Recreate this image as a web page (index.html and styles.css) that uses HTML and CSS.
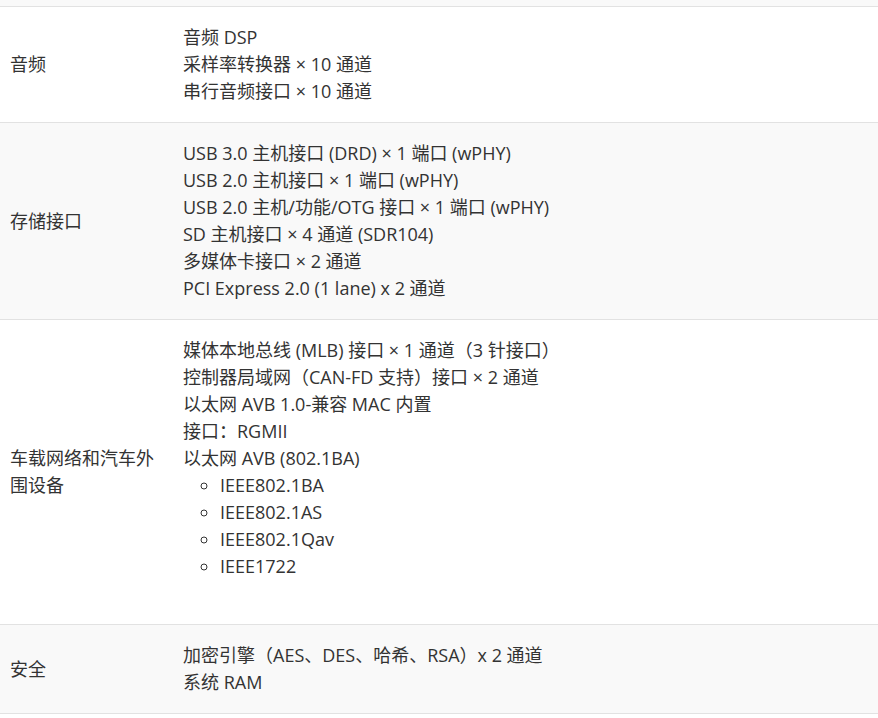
FILE: index.html
```html
<!DOCTYPE html>
<html lang="zh-CN">
<head>
<meta charset="utf-8">
<link rel="stylesheet" href="styles.css">
</head>
<body>
<table class="spec">
  <tbody>
    <tr class="prev"><td></td><td></td></tr>
    <tr>
      <td class="label">音频</td>
      <td class="value">音频 DSP<br>采样率转换器 × 10 通道<br>串行音频接口 × 10 通道</td>
    </tr>
    <tr class="alt">
      <td class="label">存储接口</td>
      <td class="value">USB 3.0 主机接口 (DRD) × 1 端口 (wPHY)<br>USB 2.0 主机接口 × 1 端口 (wPHY)<br>USB 2.0 主机/功能/OTG 接口 × 1 端口 (wPHY)<br>SD 主机接口 × 4 通道 (SDR104)<br>多媒体卡接口 × 2 通道<br>PCI Express 2.0 (1 lane) x 2 通道</td>
    </tr>
    <tr>
      <td class="label">车载网络和汽车外围设备</td>
      <td class="value">媒体本地总线 (MLB) 接口 × 1 通道（3 针接口）<br>控制器局域网（CAN-FD 支持）接口 × 2 通道<br>以太网 AVB 1.0-兼容 MAC 内置<br>接口：RGMII<br>以太网 AVB (802.1BA)
        <ul class="sub">
          <li>IEEE802.1BA</li>
          <li>IEEE802.1AS</li>
          <li>IEEE802.1Qav</li>
          <li>IEEE1722</li>
        </ul>
      </td>
    </tr>
    <tr class="alt">
      <td class="label">安全</td>
      <td class="value">加密引擎（AES、DES、哈希、RSA）x 2 通道<br>系统 RAM</td>
    </tr>
  </tbody>
</table>
</body>
</html>
```

FILE: styles.css
```css
html, body {
  margin: 0;
  padding: 0;
  background: #ffffff;
}

body {
  font-family: "Open Sans", "Noto Sans CJK SC", sans-serif;
  font-size: 18px;
  line-height: 27px;
  color: #333333;
}

.spec {
  width: 100%;
  border-collapse: collapse;
}

.spec tr {
  border-bottom: 1px solid #e2e2e2;
}

.spec tr.prev td {
  height: 6px;
  padding: 0;
  background: #f9f9f9;
}

.spec tr.alt td {
  background: #f9f9f9;
}

.spec td {
  padding: 17px 10px 17px 10px;
  vertical-align: middle;
}

.spec td.label {
  width: 153px;
}

.spec td.value {
  vertical-align: top;
}

.sub {
  list-style: circle;
  margin: 0 0 27px 0;
  padding-left: 37px;
}
```
